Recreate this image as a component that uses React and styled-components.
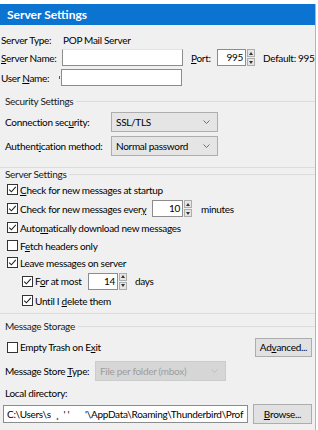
import React from "react";
import styled, { createGlobalStyle } from "styled-components";

const Global = createGlobalStyle`
  body {
    margin: 0;
    background: #ffffff;
    font-family: Lato, "Noto Sans", sans-serif;
    font-size: 10px;
    letter-spacing: -0.3px;
    color: #000;
  }
`;

const Panel = styled.div`
  width: 315px;
  height: 426px;
  margin-top: 4px;
  background: #f0f0f0;
  border-right: 1px solid #b4b4b4;
  overflow: hidden;
`;

const Header = styled.div`
  height: 21px;
  background: #0b74d1;
  color: #fff;
  font-weight: 700;
  font-size: 12px;
  letter-spacing: 0;
  padding-left: 7px;
  display: flex;
  align-items: center;
`;

const Row = styled.div`
  display: flex;
  align-items: center;
  height: ${(p) => p.h || 17}px;
  margin-top: ${(p) => p.mt || 0}px;
  padding-left: ${(p) => p.pl || 0}px;
  white-space: nowrap;
`;

const Label = styled.span`
  display: inline-block;
  width: ${(p) => (p.w ? p.w + "px" : "auto")};
  margin-left: ${(p) => p.ml || 0}px;
  flex-shrink: 0;
`;

const U = styled.span`
  text-decoration: underline;
`;

const TextBox = styled.div`
  width: ${(p) => p.w}px;
  height: ${(p) => p.h || 17}px;
  box-sizing: border-box;
  background: #fff;
  border: 1px solid #8c8c8c;
  border-top-color: ${(p) => (p.soft ? "#e4e4e4" : "#8c8c8c")};
  padding: 0 3px;
  display: flex;
  align-items: center;
  overflow: hidden;
  white-space: pre;
  flex-shrink: 0;
`;

const Marker = styled.span`
  width: 1px;
  height: 3px;
  background: #e0201c;
  margin: 0 1px 0 -2px;
`;

const SpinWrap = styled.div`
  display: flex;
  align-items: stretch;
  height: 17px;
  margin-left: ${(p) => p.ml || 0}px;
`;

const SpinField = styled.div`
  width: ${(p) => p.w}px;
  box-sizing: border-box;
  background: #fff;
  border: 1px solid #8c8c8c;
  text-align: right;
  padding-right: 2px;
  line-height: 15px;
`;

const SpinBtns = styled.div`
  width: 8px;
  display: flex;
  flex-direction: column;
  gap: 1px;
  margin-left: 1px;
`;

const SpinBtn = styled.div`
  flex: 1;
  background: #e6e6e6;
  border: 1px solid #adadad;
  display: flex;
  align-items: center;
  justify-content: center;
  &::after {
    content: "";
    border-left: 2px solid transparent;
    border-right: 2px solid transparent;
    ${(p) => (p.down ? "border-top: 3px solid #333;" : "border-bottom: 3px solid #333;")}
  }
`;

const Legend = styled.div`
  display: flex;
  align-items: center;
  height: 12px;
  margin-top: ${(p) => p.mt || 0}px;
  padding-left: 5px;
  color: #1a1a1a;
  &::after {
    content: "";
    flex: 1;
    height: 1px;
    background: #dcdcdc;
    margin-left: 3px;
  }
`;

const Rule = styled.div`
  height: 1px;
  background: #dcdcdc;
  margin-top: ${(p) => p.mt || 0}px;
`;

const Select = styled.div`
  width: ${(p) => p.w}px;
  height: 20px;
  box-sizing: border-box;
  background: ${(p) => (p.disabled ? "#d6d6d6" : "#e5e5e5")};
  border: 1px solid ${(p) => (p.disabled ? "#cccccc" : "#adadad")};
  color: ${(p) => (p.disabled ? "#9d9d9d" : "#000")};
  display: flex;
  align-items: center;
  justify-content: space-between;
  padding: 0 7px 0 4px;
  flex-shrink: 0;
`;

const Chevron = ({ color = "#6e6e6e" }) => (
  <svg width="7" height="4" viewBox="0 0 7 4">
    <polyline points="0.5,0.5 3.5,3.5 6.5,0.5" fill="none" stroke={color} strokeWidth="1" />
  </svg>
);

const Box = styled.span`
  width: 11px;
  height: 11px;
  box-sizing: border-box;
  border: 1px solid #333;
  background: #fff;
  display: inline-flex;
  align-items: center;
  justify-content: center;
  margin-right: 2px;
  flex-shrink: 0;
`;

const Check = ({ on }) => (
  <Box>
    {on && (
      <svg width="9" height="9" viewBox="0 0 9 9">
        <polyline points="1.2,4.6 3.4,6.8 7.8,1.8" fill="none" stroke="#222" strokeWidth="1.1" />
      </svg>
    )}
  </Box>
);

const Button = styled.div`
  width: ${(p) => p.w}px;
  height: ${(p) => p.h || 19}px;
  box-sizing: border-box;
  background: #e1e1e1;
  border: 1px solid #adadad;
  display: flex;
  align-items: center;
  justify-content: center;
  margin-left: auto;
  margin-right: 3px;
  flex-shrink: 0;
`;

const Spin = ({ value, w, ml }) => (
  <SpinWrap ml={ml}>
    <SpinField w={w}>{value}</SpinField>
    <SpinBtns>
      <SpinBtn />
      <SpinBtn down />
    </SpinBtns>
  </SpinWrap>
);

export default function App() {
  return (
    <>
      <Global />
      <Panel>
        <Header>Server Settings</Header>

        <Row h={14} mt={8} pl={1}>
          <Label w={62}>Server Type:</Label>
          <Label>POP Mail Server</Label>
        </Row>
        <Row mt={2} pl={1}>
          <Label w={61}>
            <U>S</U>erver Name:
          </Label>
          <TextBox w={121} soft />
          <Label ml={8} w={26}>
            <U>P</U>ort:
          </Label>
          <Spin value="995" w={29} />
          <Label ml={8} w={35}>Default:</Label>
          <Label>995</Label>
        </Row>
        <Row mt={3} pl={1}>
          <Label w={60}>
            User <U>N</U>ame:
          </Label>
          <Marker />
          <TextBox w={121} />
        </Row>

        <Legend mt={9}>Security Settings</Legend>
        <Row h={20} mt={5} pl={5}>
          <Label w={106}>
            Connection sec<U>u</U>rity:
          </Label>
          <Select w={107}>
            SSL/TLS
            <Chevron />
          </Select>
        </Row>
        <Row h={20} mt={4} pl={5}>
          <Label w={106}>
            Authent<U>i</U>cation method:
          </Label>
          <Select w={107}>
            Normal password
            <Chevron />
          </Select>
        </Row>
        <Rule mt={11} />

        <Legend>Server Settings</Legend>
        <Row h={19} pl={7}>
          <Check on />
          <Label>
            <U>C</U>heck for new messages at startup
          </Label>
        </Row>
        <Row h={19} pl={7}>
          <Check on />
          <Label w={130}>
            Check for new messages ever<U>y</U>
          </Label>
          <Spin value="10" w={31} ml={2} />
          <Label ml={9}>minutes</Label>
        </Row>
        <Row h={19} pl={7}>
          <Check on />
          <Label>
            Auto<U>m</U>atically download new messages
          </Label>
        </Row>
        <Row h={17} pl={7}>
          <Check />
          <Label>
            F<U>e</U>tch headers only
          </Label>
        </Row>
        <Row h={17} pl={7}>
          <Check on />
          <Label>Leave messages on server</Label>
        </Row>
        <Row h={20} pl={22}>
          <Check on />
          <Label w={53}>
            F<U>o</U>r at most
          </Label>
          <Spin value="14" w={30} />
          <Label ml={8}>days</Label>
        </Row>
        <Row h={19} pl={22}>
          <Check on />
          <Label>
            Until I <U>d</U>elete them
          </Label>
        </Row>
        <Rule mt={3} />

        <Legend mt={6}>Message Storage</Legend>
        <Row h={20} mt={5} pl={7}>
          <Check />
          <Label>
            Empty Trash on E<U>x</U>it
          </Label>
          <Button w={57}>
            Ad<U>v</U>anced...
          </Button>
        </Row>
        <Row h={20} mt={4} pl={5}>
          <Label w={90}>
            Message Store <U>T</U>ype:
          </Label>
          <Select w={131} disabled>
            File per folder (mbox)
            <Chevron color="#bdbdbd" />
          </Select>
        </Row>
        <Row h={14} mt={5} pl={5}>
          <Label>Local directory:</Label>
        </Row>
        <Row h={20} mt={4} pl={3}>
          <TextBox w={245} h={18}>{"C:\\Users\\s  ¸  ' '       '\\AppData\\Roaming\\Thunderbird\\Prof"}</TextBox>
          <Button w={59} h={20}>
            <U>B</U>rowse...
          </Button>
        </Row>
      </Panel>
    </>
  );
}
